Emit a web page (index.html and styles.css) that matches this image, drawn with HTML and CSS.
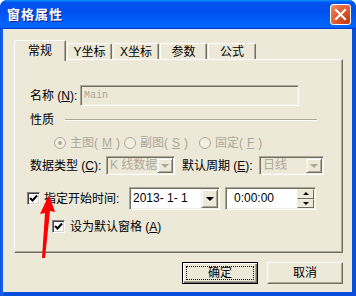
FILE: index.html
```html
<!DOCTYPE html>
<html lang="zh-CN">
<head>
    <meta charset="UTF-8">
    <title>窗格属性</title>
    <link rel="stylesheet" href="styles.css">
</head>
<body>
    <div class="window">
        <div class="titlebar">
            <span class="title">窗格属性</span>
            <span class="close">
                <svg width="19" height="19" viewBox="0 0 19 19"><path d="M5 5 L14 14 M14 5 L5 14" stroke="#fff" stroke-width="2.2" stroke-linecap="square"/></svg>
            </span>
        </div>

        <div class="client">
            <div class="tabs">
                <div class="tab active t1">常规</div>
                <div class="tab t2">Y坐标</div>
                <div class="tab t3">X坐标</div>
                <div class="tab t4">参数</div>
                <div class="tab t5">公式</div>
            </div>

            <div class="panel">
                <div class="row name-row">
                    <label class="lbl-name">名称 (<u>N</u>):</label>
                    <div class="field disabled">Main</div>
                </div>

                <div class="group-title">
                    <span>性质</span>
                    <span class="rule"></span>
                </div>

                <div class="radios">
                    <span class="radio-item"><span class="radio checked"></span>主图(<u>M</u>)</span>
                    <span class="radio-item"><span class="radio"></span>副图(<u>S</u>)</span>
                    <span class="radio-item"><span class="radio"></span>固定(<u>F</u>)</span>
                </div>

                <div class="row type-row">
                    <label class="lbl-type">数据类型 (<u>C</u>):</label>
                    <div class="combo combo-type">
                        <span class="combo-text">K 线数据</span>
                        <span class="combo-btn"><span class="tri grey"></span></span>
                    </div>
                    <label class="lbl-period">默认周期 (<u>E</u>):</label>
                    <div class="combo combo-period">
                        <span class="combo-text">日线</span>
                        <span class="combo-btn"><span class="tri grey"></span></span>
                    </div>
                </div>

                <div class="row time-row">
                    <span class="check"><svg width="9" height="9" viewBox="0 0 9 9"><path d="M1 4 L3.5 6.5 L8 1.5" stroke="#000" stroke-width="2" fill="none"/></svg></span>
                    <label class="lbl-time">指定开始时间:</label>
                    <div class="edit date">
                        <span class="edit-text">2013- 1- 1</span>
                        <span class="combo-btn"><span class="tri"></span></span>
                    </div>
                    <div class="edit time">
                        <span class="edit-text">0:00:00</span>
                        <span class="spin">
                            <span class="spin-btn"><span class="tri-up"></span></span>
                            <span class="spin-btn"><span class="tri-sm"></span></span>
                        </span>
                    </div>
                </div>

                <div class="row default-row">
                    <span class="check"><svg width="9" height="9" viewBox="0 0 9 9"><path d="M1 4 L3.5 6.5 L8 1.5" stroke="#000" stroke-width="2" fill="none"/></svg></span>
                    <label class="lbl-default">设为默认窗格 (<u>A</u>)</label>
                </div>
            </div>

            <div class="buttons">
                <button class="btn default">确定</button>
                <button class="btn">取消</button>
            </div>
        </div>

        <!-- 红色箭头标注 -->
        <svg class="arrow" width="356" height="296" viewBox="0 0 356 296">
            <polygon points="49,195 55,212 50,211 45,258 42,258 45,213 40,214" fill="#ff0000"/>
        </svg>
    </div>
</body>
</html>
```

FILE: styles.css
```css
* {
    box-sizing: border-box;
}
body {
    margin: 0;
    font-family: "Liberation Sans", "Noto Sans CJK SC", sans-serif;
    font-size: 12px;
    line-height: 14px;
    color: #000;
}
u {
    text-decoration: underline;
}
.window {
    position: relative;
    width: 356px;
    height: 296px;
    display: flex;
    flex-direction: column;
    background: linear-gradient(to right, #0a4fdc, #1566f0 2px, #0a4fdc 4px);
    border-radius: 7px 7px 0 0;
    overflow: hidden;
}
.titlebar {
    height: 29px;
    display: flex;
    align-items: center;
    justify-content: space-between;
    padding: 0 5px 0 7px;
    background: linear-gradient(180deg, #0997ff, #0053ee 8%, #0050ee 40%, #0066ff 88%, #0066ff 93%, #005bff 95%, #003dd7 96%, #003dd7);
}
.title {
    color: #fff;
    font-weight: bold;
    font-size: 13px;
    letter-spacing: 1px;
    text-shadow: 1px 1px #0a1e8c;
}
.close {
    width: 21px;
    height: 21px;
    display: flex;
    align-items: center;
    justify-content: center;
    border: 1px solid #fff;
    border-radius: 3px;
    background: radial-gradient(circle at 85% 85%, #c43b10 0%, #e0582e 50%, #e8774f 80%, #f4a88a 100%);
}
.client {
    flex: 1;
    margin: 0 4px 4px 3px;
    background: #ece9d8;
    padding: 11px 9px 0 11px;
}

/* pestañas */
.tabs {
    display: flex;
    align-items: flex-end;
    gap: 1px;
    height: 19px;
}
.tab {
    height: 16px;
    padding-top: 1px;
    text-align: center;
    border: 1px solid;
    border-bottom: none;
    border-color: #fff #716f64 transparent #fff;
    border-radius: 2px 2px 0 0;
    box-shadow: inset -1px 0 #aca899;
    background: #ece9d8;
}
.tab.active {
    height: 21px;
    padding-top: 3px;
    margin-bottom: -2px;
    position: relative;
    z-index: 1;
}
.t1 { width: 52px; }
.t2 { width: 45px; }
.t3 { width: 46px; }
.t4 { width: 47px; }
.t5 { width: 48px; }

.panel {
    height: 194px;
    border: 1px solid;
    border-color: #fff #716f64 #716f64 #fff;
    box-shadow: inset -1px -1px #aca899;
    padding: 25px 0 0 15px;
}
.row {
    display: flex;
    align-items: center;
    white-space: nowrap;
}
.name-row {
    height: 21px;
}
.lbl-name {
    width: 50px;
}
.field {
    width: 219px;
    height: 21px;
    border: 1px solid;
    border-color: #aca899 #fff #fff #aca899;
    box-shadow: inset 1px 1px #716f64, inset -1px -1px #f1efe2;
    padding: 3px 0 0 3px;
    font-family: "Liberation Mono", monospace;
    font-size: 10px;
    line-height: 14px;
}
.disabled {
    color: #aca899;
}

.group-title {
    display: flex;
    align-items: center;
    width: 287px;
    margin-top: 8px;
    height: 12px;
    line-height: 12px;
}
.rule {
    flex: 1;
    height: 2px;
    margin-left: 11px;
    border-top: 1px solid #aca899;
    border-bottom: 1px solid #fff;
}

.radios {
    display: grid;
    grid-template-columns: 70px 75px auto;
    margin: 10px 0 0 24px;
    height: 13px;
    color: #aca899;
    white-space: nowrap;
}
.radio-item {
    display: flex;
    align-items: center;
    gap: 4px;
}
.radio {
    width: 12px;
    height: 12px;
    border-radius: 50%;
    border: 1px solid #aca899;
    background: #f1efe2;
    display: flex;
    align-items: center;
    justify-content: center;
}
.radio.checked::after {
    content: "";
    width: 4px;
    height: 4px;
    border-radius: 50%;
    background: #aca899;
}

.type-row {
    margin-top: 7px;
    height: 19px;
}
.lbl-type {
    width: 76px;
}
.lbl-period {
    width: 77px;
    margin-left: 7px;
}
.combo, .edit {
    display: flex;
    justify-content: space-between;
    border: 1px solid;
    border-color: #aca899 #fff #fff #aca899;
    box-shadow: inset 1px 1px #716f64, inset -1px -1px #f1efe2;
    padding: 1px;
}
.combo {
    height: 19px;
    color: #aca899;
}
.combo-type { width: 69px; }
.combo-period { width: 65px; }
.combo-text, .edit-text {
    padding-left: 2px;
    line-height: 15px;
    overflow: hidden;
}
.combo-btn {
    flex: none;
    width: 16px;
    display: flex;
    align-items: center;
    justify-content: center;
    border: 1px solid;
    border-color: #f1efe2 #716f64 #716f64 #f1efe2;
    box-shadow: inset 1px 1px #fff, inset -1px -1px #aca899;
    background: #ece9d8;
}
.tri {
    width: 0;
    height: 0;
    border-left: 4px solid transparent;
    border-right: 4px solid transparent;
    border-top: 4px solid #000;
}
.tri.grey {
    border-top-color: #aca899;
}
.tri-sm, .tri-up {
    width: 0;
    height: 0;
    border-left: 3px solid transparent;
    border-right: 3px solid transparent;
}
.tri-sm { border-top: 3px solid #000; }
.tri-up { border-bottom: 3px solid #000; }

.time-row {
    margin-top: 12px;
    height: 23px;
}
.check {
    flex: none;
    width: 13px;
    height: 13px;
    display: flex;
    align-items: center;
    justify-content: center;
    background: #fff;
    border: 1px solid;
    border-color: #808080 #fff #fff #808080;
    box-shadow: inset 1px 1px #404040, inset -1px -1px #d4d0c8;
}
.time-row .check {
    margin-left: -3px;
}
.lbl-time {
    width: 85px;
    margin-left: 4px;
}
.edit {
    width: 91px;
    height: 23px;
    background: #fff;
}
.date .edit-text {
    padding-left: 2px;
    line-height: 19px;
}
.date .combo-btn {
    width: 17px;
}
.time {
    margin-left: 5px;
}
.time .edit-text {
    padding-left: 7px;
    line-height: 19px;
}
.spin {
    width: 17px;
    display: flex;
    flex-direction: column;
}
.spin-btn {
    flex: 1;
    display: flex;
    align-items: center;
    justify-content: center;
    border: 1px solid;
    border-color: #f1efe2 #716f64 #716f64 #f1efe2;
    background: #ece9d8;
}

.default-row {
    margin-top: 10px;
    height: 13px;
}
.default-row .check {
    margin-left: 22px;
}
.lbl-default {
    margin-left: 5px;
}

.buttons {
    display: flex;
    justify-content: flex-end;
    gap: 9px;
    margin-top: 9px;
}
.btn {
    position: relative;
    width: 76px;
    height: 22px;
    padding: 0;
    font: inherit;
    line-height: 18px;
    color: #000;
    background: #ece9d8;
    border: 1px solid;
    border-color: #fff #716f64 #716f64 #fff;
    box-shadow: inset -1px -1px #aca899;
}
.btn.default {
    border: 1px solid #000;
    box-shadow: inset 1px 1px #fff, inset -1px -1px #716f64, inset -2px -2px #aca899;
}
.btn.default::after {
    content: "";
    position: absolute;
    top: 3px;
    left: 3px;
    right: 3px;
    bottom: 3px;
    border: 1px dotted #000;
}

.arrow {
    position: absolute;
    left: 0;
    top: 0;
    pointer-events: none;
}
```
